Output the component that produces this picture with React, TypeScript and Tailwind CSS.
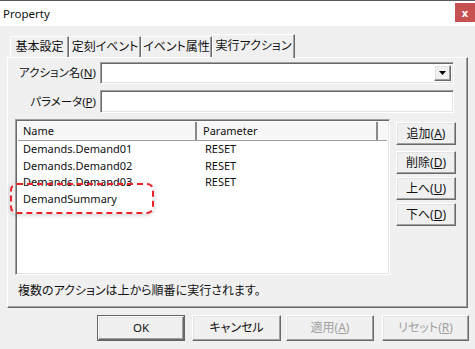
import React from "react";

const raised =
  "border border-t-white border-l-white border-r-[#696969] border-b-[#696969] shadow-[inset_-1px_-1px_0_#a0a0a0,inset_1px_1px_0_#e3e3e3]";
const sunken =
  "border border-t-[#a0a0a0] border-l-[#a0a0a0] border-r-white border-b-white shadow-[inset_1px_1px_0_#696969,inset_-1px_-1px_0_#e3e3e3]";

const rows = [
  { name: "Demands.Demand01", param: "RESET" },
  { name: "Demands.Demand02", param: "RESET" },
  { name: "Demands.Demand03", param: "RESET" },
  { name: "DemandSummary", param: "" },
];

const tabs = [
  { label: "基本設定", w: "w-[59px]" },
  { label: "定刻イベント", w: "w-[72px]" },
  { label: "イベント属性", w: "w-[71px]" },
];

const Mn = ({ k }: { k: string }) => (
  <>
    (<span className="underline underline-offset-1">{k}</span>)
  </>
);

const SideButton = ({ label, k, mt }: { label: string; k: string; mt: string }) => (
  <div className={`${raised} ${mt} h-[23px] w-[60px] bg-[#f0f0f0] flex items-center justify-center`}>
    {label}
    <Mn k={k} />
  </div>
);

export default function App() {
  return (
    <div className="relative w-[475px] h-[349px] overflow-hidden bg-[#f0f0f0] border-t border-[#5a5a5a] text-[12px] text-[#111] font-['Noto_Sans','Noto_Sans_CJK_JP',sans-serif] [font-feature-settings:'palt']">
      {/* Title bar */}
      <div className="h-[25px] bg-white flex items-start justify-between">
        <span className="pl-[3px] pt-[4px] text-[11.5px]">Property</span>
        <div className="mt-[2px] w-[20px] h-[19px] bg-[#c75050] text-white text-[11px] font-bold leading-none flex items-center justify-center">
          x
        </div>
      </div>

      {/* Tabs */}
      <div className="h-[31px] pl-[10px] flex items-end">
        {tabs.map((t) => (
          <div
            key={t.label}
            className={`${t.w} h-[21px] border-t border-l border-r border-t-white border-l-white border-r-[#696969] shadow-[inset_-1px_0_0_#a0a0a0] flex items-center justify-center`}
          >
            {t.label}
          </div>
        ))}
        <div className="relative z-10 w-[83px] h-[24px] mb-[-1px] bg-[#f0f0f0] border-t border-l border-r border-t-white border-l-white border-r-[#696969] shadow-[inset_-1px_0_0_#a0a0a0] flex items-start justify-center pt-[2px]">
          実行アクション
        </div>
      </div>

      {/* Panel */}
      <div className="ml-[7px] w-[461px] h-[251px] border border-t-white border-l-white border-r-[#696969] border-b-[#696969] shadow-[inset_-1px_-1px_0_#a0a0a0]">
        <div className="pt-[4px] flex items-center h-[26px]">
          <span className="w-[88px] text-right text-[11.5px]">
            アクション名<Mn k="N" />
          </span>
          <div className={`${sunken} ml-[4px] w-[354px] h-[22px] bg-white flex justify-end p-[2px]`}>
            <div className={`${raised} w-[17px] h-full bg-[#f0f0f0] flex items-center justify-center`}>
              <svg width="7" height="4" viewBox="0 0 7 4">
                <path d="M0 0h7L3.5 4z" fill="#000" />
              </svg>
            </div>
          </div>
        </div>
        <div className="mt-[6px] flex items-center h-[23px]">
          <span className="w-[88px] text-right text-[11.5px]">
            パラメータ<Mn k="P" />
          </span>
          <div className={`${sunken} ml-[4px] w-[354px] h-[23px] bg-white`} />
        </div>

        <div className="mt-[6px] flex">
          {/* List view */}
          <div className={`${sunken} ml-[7px] w-[375px] h-[156px] bg-white p-[2px] flex flex-col`}>
            <div className="flex h-[19px] text-[11px] bg-[#f7f7f7]">
              <div className="w-[179px] pl-[5px] flex items-center border-r-2 border-r-[#8a8a8a] border-b border-b-[#a0a0a0]">
                Name
              </div>
              <div className="w-[181px] pl-[6px] flex items-center border-r-2 border-r-[#8a8a8a] border-b border-b-[#a0a0a0]">
                Parameter
              </div>
              <div className="flex-1 border-b border-b-[#a0a0a0]" />
            </div>
            {rows.map((r) => (
              <div key={r.name} className="flex h-[16.5px] items-center text-[11px]">
                <span className="w-[181px] pl-[5px]">{r.name}</span>
                <span className="pl-[6px]">{r.param}</span>
              </div>
            ))}
          </div>

          {/* Side buttons */}
          <div className="ml-[6px] pt-[3px] flex flex-col">
            <SideButton label="追加" k="A" mt="mt-0" />
            <SideButton label="削除" k="D" mt="mt-[6px]" />
            <SideButton label="上へ" k="U" mt="mt-[3px]" />
            <SideButton label="下へ" k="D" mt="mt-[3px]" />
          </div>
        </div>

        <div className="mt-[8px] ml-[10px] h-[16px] leading-[16px]">
          複数のアクションは上から順番に実行されます。
        </div>
      </div>

      {/* Bottom buttons */}
      <div className="mt-[7px] flex">
        <div className="ml-[97px] w-[88px] h-[26px] border border-[#646464] bg-[#f0f0f0]">
          <div className={`${raised} h-full flex items-center justify-center text-[11.5px]`}>OK</div>
        </div>
        <div className={`${raised} ml-[7px] w-[89px] h-[26px] bg-[#f0f0f0] flex items-center justify-center`}>
          キャンセル
        </div>
        <div className={`${raised} ml-[5px] w-[88px] h-[26px] bg-[#f0f0f0] text-[#a0a0a0] flex items-center justify-center`}>
          適用<Mn k="A" />
        </div>
        <div className={`${raised} ml-[8px] w-[87px] h-[26px] bg-[#f0f0f0] text-[#a0a0a0] flex items-center justify-center`}>
          リセット<Mn k="R" />
        </div>
      </div>

      {/* Annotation */}
      <div className="absolute left-[10px] top-[182px] w-[144px] h-[31px] border-2 border-dashed border-[#e8232a] rounded-[7px] shadow-[0_1px_4px_rgba(0,0,0,0.2)]" />
    </div>
  );
}
